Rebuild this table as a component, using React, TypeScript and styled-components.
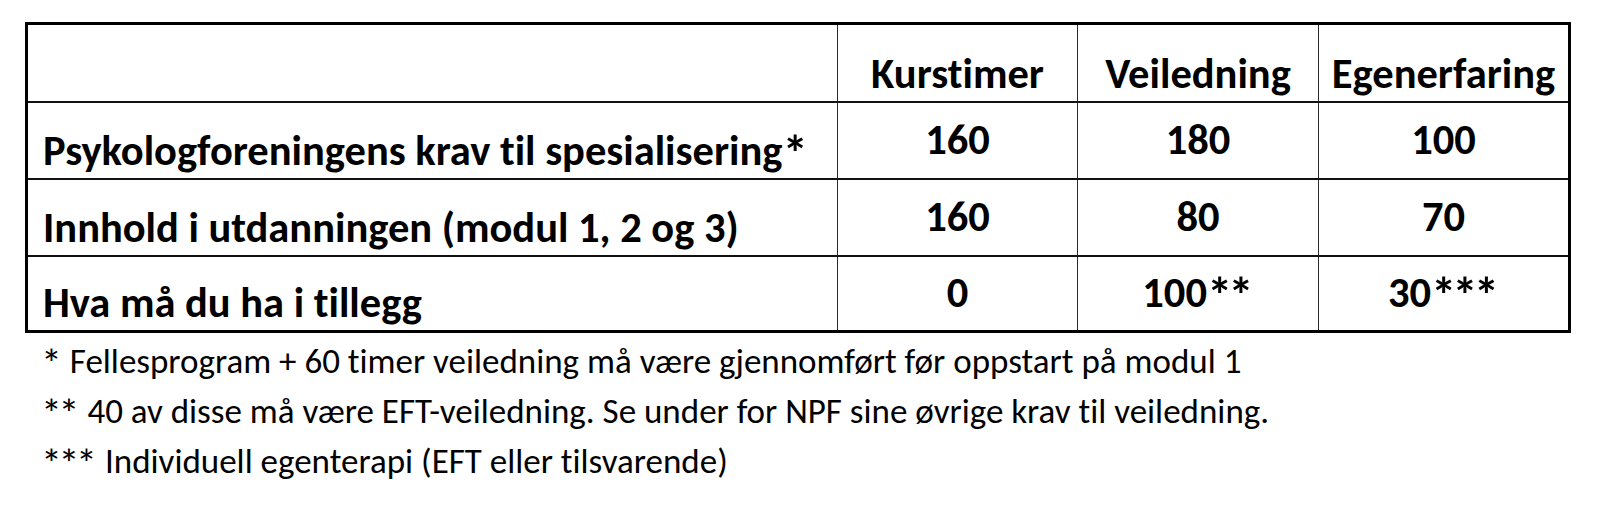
import React from 'react';
import styled, { createGlobalStyle } from 'styled-components';

const Global = createGlobalStyle`
  body {
    margin: 0;
    background: #fff;
    font-family: Carlito, Calibri, Lato, "Liberation Sans", sans-serif;
    font-variant-ligatures: none;
    color: #000;
  }
`;

const Page = styled.div`
  padding: 22px 0 0 25px;
`;

const Table = styled.div`
  display: grid;
  grid-template-columns: 810px 240px 241px 249px;
  grid-template-rows: 78px 77px 77px 73px;
  width: 1540px;
  border: 3px solid #000;
`;

type Kind = 'head' | 'label' | 'num';

const Cell = styled.div<{ $kind: Kind; $lastCol?: boolean; $lastRow?: boolean }>`
  box-sizing: border-box;
  display: flex;
  border-right: ${(p) => (p.$lastCol ? 'none' : '1px solid #2a2a2a')};
  border-bottom: ${(p) => (p.$lastRow ? 'none' : '2px solid #111')};
  font-weight: 700;
  font-size: 42.5px;
  line-height: 1;
  white-space: nowrap;
  align-items: ${(p) => (p.$kind === 'num' ? 'center' : 'flex-end')};
  justify-content: ${(p) => (p.$kind === 'label' ? 'flex-start' : 'center')};
  padding: ${(p) => (p.$kind === 'label' ? '0 0 6px 15px' : p.$kind === 'head' ? '0 0 6px 0' : '0')};
`;

const Stars = styled.span`
  font-size: 1.2em;
  line-height: 0;
  vertical-align: -0.12em;
  letter-spacing: -0.08em;
  padding-right: 0.08em;
`;

const Notes = styled.div`
  padding: 3px 0 0 16px;
  font-size: 35px;
  line-height: 50px;
  white-space: nowrap;
`;

const Note = styled.div``;

const headers = ['Kurstimer', 'Veiledning', 'Egenerfaring'];

const rows: { label: string; values: string[] }[] = [
  { label: 'Psykologforeningens krav til spesialisering*', values: ['160', '180', '100'] },
  { label: 'Innhold i utdanningen (modul 1, 2 og 3)', values: ['160', '80', '70'] },
  { label: 'Hva må du ha i tillegg', values: ['0', '100**', '30***'] },
];

const notes = [
  '* Fellesprogram + 60 timer veiledning må være gjennomført før oppstart på modul 1',
  '** 40 av disse må være EFT-veiledning. Se under for NPF sine øvrige krav til veiledning.',
  '*** Individuell egenterapi (EFT eller tilsvarende)',
];

// wrap runs of asterisks so they get the larger, tighter Calibri-like look
function withStars(text: string) {
  return text.split(/(\*+)/).map((part, i) =>
    part.startsWith('*') ? <Stars key={i}>{part}</Stars> : <React.Fragment key={i}>{part}</React.Fragment>
  );
}

export default function App() {
  return (
    <>
      <Global />
      <Page>
        <Table>
          <Cell $kind="head" />
          {headers.map((h, i) => (
            <Cell key={h} $kind="head" $lastCol={i === headers.length - 1}>
              {h}
            </Cell>
          ))}
          {rows.map((r, ri) => {
            const lastRow = ri === rows.length - 1;
            return (
              <React.Fragment key={r.label}>
                <Cell $kind="label" $lastRow={lastRow}>
                  <span>{withStars(r.label)}</span>
                </Cell>
                {r.values.map((v, vi) => (
                  <Cell key={vi} $kind="num" $lastRow={lastRow} $lastCol={vi === r.values.length - 1}>
                    <span>{withStars(v)}</span>
                  </Cell>
                ))}
              </React.Fragment>
            );
          })}
        </Table>
        <Notes>
          {notes.map((n) => (
            <Note key={n}>{withStars(n)}</Note>
          ))}
        </Notes>
      </Page>
    </>
  );
}
